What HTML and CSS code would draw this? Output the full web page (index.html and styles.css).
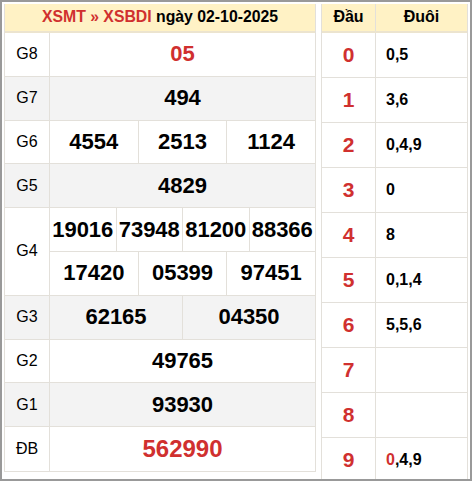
FILE: index.html
```html
<!DOCTYPE html>
<html lang="vi">
<head>
<meta charset="utf-8">
<link rel="stylesheet" href="styles.css">
</head>
<body>
<div class="frame">
  <div class="results">
    <div class="title"><span class="red">XSMT » XSBDI</span> ngày 02-10-2025</div>
    <div class="row">
      <div class="lbl">G8</div>
      <div class="vals"><div class="v red">05</div></div>
    </div>
    <div class="row alt">
      <div class="lbl">G7</div>
      <div class="vals"><div class="v">494</div></div>
    </div>
    <div class="row">
      <div class="lbl">G6</div>
      <div class="vals"><div class="v">4554</div><div class="v">2513</div><div class="v">1124</div></div>
    </div>
    <div class="row alt">
      <div class="lbl">G5</div>
      <div class="vals"><div class="v">4829</div></div>
    </div>
    <div class="row double">
      <div class="lbl">G4</div>
      <div class="stack">
        <div class="vals sub"><div class="v">19016</div><div class="v">73948</div><div class="v">81200</div><div class="v">88366</div></div>
        <div class="vals"><div class="v">17420</div><div class="v">05399</div><div class="v">97451</div></div>
      </div>
    </div>
    <div class="row alt">
      <div class="lbl">G3</div>
      <div class="vals"><div class="v">62165</div><div class="v">04350</div></div>
    </div>
    <div class="row">
      <div class="lbl">G2</div>
      <div class="vals"><div class="v">49765</div></div>
    </div>
    <div class="row alt">
      <div class="lbl">G1</div>
      <div class="vals"><div class="v">93930</div></div>
    </div>
    <div class="row">
      <div class="lbl">ĐB</div>
      <div class="vals"><div class="v red big">562990</div></div>
    </div>
  </div>
  <div class="loto">
    <div class="lhead"><div class="dau">Đầu</div><div class="duoi">Đuôi</div></div>
    <div class="lrow"><div class="dau num">0</div><div class="duoi">0,5</div></div>
    <div class="lrow"><div class="dau num">1</div><div class="duoi">3,6</div></div>
    <div class="lrow"><div class="dau num">2</div><div class="duoi">0,4,9</div></div>
    <div class="lrow"><div class="dau num">3</div><div class="duoi">0</div></div>
    <div class="lrow"><div class="dau num">4</div><div class="duoi">8</div></div>
    <div class="lrow"><div class="dau num">5</div><div class="duoi">0,1,4</div></div>
    <div class="lrow"><div class="dau num">6</div><div class="duoi">5,5,6</div></div>
    <div class="lrow"><div class="dau num">7</div><div class="duoi"></div></div>
    <div class="lrow"><div class="dau num">8</div><div class="duoi"></div></div>
    <div class="lrow"><div class="dau num">9</div><div class="duoi"><span class="red">0</span>,4,9</div></div>
  </div>
</div>
</body>
</html>
```
FILE: styles.css
```css
* { box-sizing: border-box; }
html, body { margin: 0; padding: 0; background: #fff; }
body { font-family: "Liberation Sans", Arial, sans-serif; color: #000; }

.frame {
  width: 472px;
  height: 481px;
  border: 2px solid #999;
  padding: 2px;
  display: flex;
  gap: 5px;
  overflow: hidden;
  background: #fff;
  align-items: flex-start;
}

.red { color: #d0302f; }

.results {
  width: 312px;
  flex: none;
  border: 1px solid #e3e0da;
  border-top: none;
}

.title {
  height: 29px;
  background: #fff2c5;
  border-bottom: 2px solid #ece4cf;
  font-weight: bold;
  font-size: 15.8px;
  line-height: 26px;
  text-align: center;
  white-space: nowrap;
}

.row {
  display: flex;
  height: 43.8px;
  border-bottom: 1px solid #e3e0da;
}
.row:last-child { border-bottom: none; }
.row.alt { background: #f3f3f3; }
.row.double { height: 87.6px; }

.lbl {
  width: 45px;
  flex: none;
  border-right: 1px solid #e3e0da;
  display: flex;
  align-items: center;
  justify-content: center;
  font-size: 16px;
}

.stack {
  flex: 1;
  display: flex;
  flex-direction: column;
}
.stack .vals { flex: 1; }
.vals.sub { border-bottom: 1px solid #e3e0da; }

.vals {
  flex: 1;
  display: flex;
}

.v {
  flex: 1;
  display: flex;
  align-items: center;
  justify-content: center;
  font-weight: bold;
  font-size: 22px;
  border-right: 1px solid #e3e0da;
}
.v:last-child { border-right: none; }
.v.big { font-size: 24px; }

.loto {
  width: 147px;
  flex: none;
  border: 1px solid #e3e0da;
  border-top: none;
}

.lhead {
  display: flex;
  height: 29px;
  background: #fff2c5;
  border-bottom: 2px solid #ece4cf;
  font-weight: bold;
  font-size: 16px;
}
.lhead .dau, .lhead .duoi { justify-content: center; padding-bottom: 2px; padding-left: 0; font-size: 16px; }

.lrow {
  display: flex;
  height: 45px;
  border-bottom: 1px solid #e3e0da;
}

.dau {
  width: 54px;
  flex: none;
  border-right: 1px solid #e3e0da;
  display: flex;
  align-items: center;
  justify-content: center;
}
.dau.num {
  color: #d0302f;
  font-weight: bold;
  font-size: 21px;
}

.duoi {
  flex: 1;
  display: flex;
  align-items: center;
  padding-left: 10px;
  font-weight: bold;
  font-size: 16px;
}
```
